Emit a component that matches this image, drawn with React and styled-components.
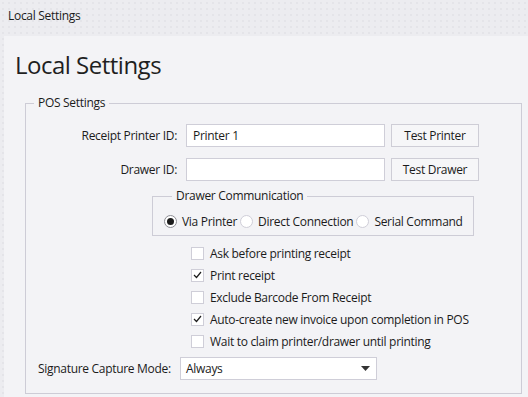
import React from 'react'
import styled, { createGlobalStyle } from 'styled-components'

const GlobalStyle = createGlobalStyle`
  html, body {
    margin: 0;
    padding: 0;
  }
  body {
    font-family: "Open Sans", "Noto Sans", sans-serif;
    font-size: 12px;
    color: #1b1b1b;
  }
`

const Window = styled.div`
  width: 528px;
  height: 397px;
  display: flex;
  flex-direction: column;
  overflow: hidden;
  background-color: #ececf0;
  background-image: radial-gradient(circle, #e3e3e8 0.7px, transparent 1.1px);
  background-size: 6px 6px;
`

const TitleBar = styled.div`
  height: 36px;
  flex: none;
  display: flex;
  align-items: flex-start;
  padding: 7px 0 0 8px;
  box-sizing: border-box;
  font-size: 12px;
  letter-spacing: -0.3px;
  line-height: 17px;
`

const Content = styled.div`
  flex: 1;
  margin-left: 4px;
  background: #f3f3f6;
  padding: 12px 6px 0 11px;
  box-sizing: border-box;
`

const Heading = styled.h1`
  margin: 0;
  font-size: 24px;
  font-weight: 400;
  letter-spacing: -0.5px;
  line-height: 33px;
  color: #1f1f1f;
`

const GroupBox = styled.fieldset`
  margin: ${p => p.$top || 0}px ${p => p.$right || 0}px 0 ${p => p.$left || 0}px;
  padding: ${p => p.$pad};
  border: 1px solid #cdccd6;
  min-width: 0;
`

const Legend = styled.legend`
  padding: 0 4px;
  margin-left: 8px;
  font-size: 12px;
  line-height: 16px;
  letter-spacing: -0.3px;
`

const FormGrid = styled.div`
  display: grid;
  grid-template-columns: 151px 199px 85px;
  column-gap: 9px;
  row-gap: 11px;
  align-items: center;
  & > button {
    margin-left: -3px;
  }
`

const Label = styled.label`
  text-align: right;
  letter-spacing: -0.3px;
`

const TextInput = styled.div`
  height: 23px;
  box-sizing: border-box;
  background: #ffffff;
  border: 1px solid #cfced8;
  padding: 0 6px;
  display: flex;
  align-items: center;
  letter-spacing: -0.3px;
`

const Button = styled.button`
  height: 23px;
  box-sizing: border-box;
  background: #f6f6f8;
  border: 1px solid #cecdd6;
  font-family: inherit;
  font-size: 12px;
  letter-spacing: -0.3px;
  color: #1b1b1b;
  padding: 0;
`

const RadioRow = styled.div`
  display: flex;
  align-items: center;
  height: 16px;
`

const RadioItem = styled.label`
  display: flex;
  align-items: center;
  gap: 5px;
  margin-right: 3px;
  letter-spacing: -0.3px;
`

const RadioCircle = styled.span`
  width: 13px;
  height: 13px;
  box-sizing: border-box;
  border-radius: 50%;
  background: #ffffff;
  border: 1px solid ${p => (p.$on ? '#8d8d94' : '#cfced8')};
  display: flex;
  align-items: center;
  justify-content: center;
  &::after {
    content: '';
    display: ${p => (p.$on ? 'block' : 'none')};
    width: 7px;
    height: 7px;
    border-radius: 50%;
    background: #1c1c1c;
  }
`

const CheckList = styled.div`
  display: flex;
  flex-direction: column;
  margin: 6px 0 0 165px;
`

const CheckRow = styled.label`
  height: 22px;
  display: flex;
  align-items: center;
  gap: 6px;
  letter-spacing: -0.3px;
`

const Box = styled.span`
  width: 13px;
  height: 13px;
  box-sizing: border-box;
  background: #ffffff;
  border: 1px solid #cfced8;
  display: flex;
  align-items: center;
  justify-content: center;
`

const SelectRow = styled.div`
  display: flex;
  align-items: center;
  margin: 5px 0 0 12px;
`

const SelectLabel = styled.span`
  width: 142px;
  letter-spacing: -0.3px;
`

const Select = styled.div`
  width: 197px;
  height: 23px;
  box-sizing: border-box;
  background: #ffffff;
  border: 1px solid #cfced8;
  display: flex;
  align-items: center;
  justify-content: space-between;
  padding: 0 6px 0 5px;
  letter-spacing: -0.3px;
`

const Check = ({ on }) => (
  <Box>
    {on && (
      <svg width="9" height="8" viewBox="0 0 9 8">
        <polyline points="1,4 3.5,6.5 8,1" fill="none" stroke="#1c1c1c" strokeWidth="1.2" />
      </svg>
    )}
  </Box>
)

const options = [
  { text: 'Ask before printing receipt', on: false },
  { text: 'Print receipt', on: true },
  { text: 'Exclude Barcode From Receipt', on: false },
  { text: 'Auto-create new invoice upon completion in POS', on: true },
  { text: 'Wait to claim printer/drawer until printing', on: false },
]

const radios = ['Via Printer', 'Direct Connection', 'Serial Command']

export default function App() {
  return (
    <Window>
      <GlobalStyle />
      <TitleBar>Local Settings</TitleBar>
      <Content>
        <Heading>Local Settings</Heading>
        <GroupBox $top={14} $left={10} $right={0} $pad="13px 0 13px 0">
          <Legend>POS Settings</Legend>
          <FormGrid>
            <Label>Receipt Printer ID:</Label>
            <TextInput>Printer 1</TextInput>
            <Button>Test Printer</Button>
            <Label>Drawer ID:</Label>
            <TextInput />
            <Button>Test Drawer</Button>
          </FormGrid>
          <GroupBox $top={7} $left={126} $right={47} $pad="9px 0 6px 11px">
            <Legend>Drawer Communication</Legend>
            <RadioRow>
              {radios.map((r, i) => (
                <RadioItem key={r}>
                  <RadioCircle $on={i === 0} />
                  {r}
                </RadioItem>
              ))}
            </RadioRow>
          </GroupBox>
          <CheckList>
            {options.map(o => (
              <CheckRow key={o.text}>
                <Check on={o.on} />
                {o.text}
              </CheckRow>
            ))}
          </CheckList>
          <SelectRow>
            <SelectLabel>Signature Capture Mode:</SelectLabel>
            <Select>
              Always
              <svg width="9" height="5" viewBox="0 0 9 5">
                <polygon points="0,0 9,0 4.5,5" fill="#333" />
              </svg>
            </Select>
          </SelectRow>
        </GroupBox>
      </Content>
    </Window>
  )
}
